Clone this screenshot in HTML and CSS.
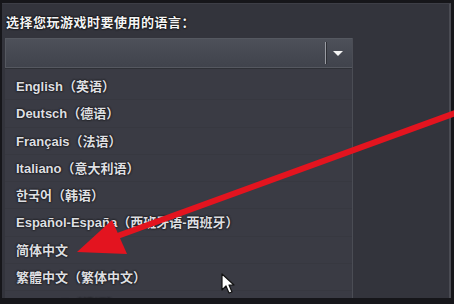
FILE: index.html
```html
<!DOCTYPE html>
<html lang="zh-CN">
<head>
    <meta charset="UTF-8">
    <title>语言选择</title>
    <link rel="stylesheet" href="styles.css">
</head>
<body>
    <div class="panel">
        <p class="label">选择您玩游戏时要使用的语言：</p>
        <div class="combo">
            <div class="select">
                <span class="divider"></span>
                <span class="caret"></span>
            </div>
            <ul class="options">
                <li>English（英语）</li>
                <li>Deutsch（德语）</li>
                <li>Français（法语）</li>
                <li>Italiano（意大利语）</li>
                <li>한국어（韩语）</li>
                <li>Español-España（西班牙语-西班牙）</li>
                <li>简体中文</li>
                <li>繁體中文（繁体中文）</li>
                <li>Русский（俄语）</li>
            </ul>
        </div>
    </div>

    <!-- annotation drawn over the screenshot -->
    <svg class="overlay" width="454" height="304" viewBox="0 0 454 304">
        <line x1="458" y1="112" x2="112" y2="238" stroke="#e3141f" stroke-width="6"/>
        <polygon points="77,252 127,254 112,220" fill="#e3141f"/>
    </svg>
    <svg class="cursor" width="14" height="22" viewBox="0 0 14 22">
        <path d="M1 1 L1 17 L5 13 L8 20 L11 19 L8 12 L13 12 Z" fill="#fff" stroke="#111" stroke-width="1.2" stroke-linejoin="round"/>
    </svg>
</body>
</html>
```

FILE: styles.css
```css
body {
    margin: 0;
    width: 454px;
    height: 304px;
    padding: 3px 3px 6px 2px;
    box-sizing: border-box;
    background: #16161a;
    font-family: 'Liberation Sans', Arial, 'Noto Sans CJK SC', sans-serif;
    overflow: hidden;
    position: relative;
}
.panel {
    height: 100%;
    background: #33343c;
    border-top: 1px solid #3d3e46;
    border-right: 2px solid #4a4b53;
    box-sizing: border-box;
    overflow: hidden;
}
.label {
    margin: 0;
    padding: 11px 0 0 4px;
    height: 16px;
    line-height: 16px;
    font-size: 13px;
    font-weight: bold;
    letter-spacing: 0.5px;
    color: #f4f4f4;
    text-shadow: 0 0 2px #000, 0 0 2px #000;
}
.combo {
    width: 347px;
    margin: 7px 0 0 3px;
    border-right: 1px solid #4b4d55;
}
.select {
    height: 30px;
    background: linear-gradient(#4d5059, #40434c);
    border: 1px solid #555860;
    border-right: none;
    box-sizing: border-box;
    display: flex;
    justify-content: flex-end;
    align-items: center;
}
.divider {
    width: 1px;
    height: 22px;
    background: #9a9ca3;
    box-shadow: 1px 0 0 #2d2f35;
    margin-right: 7px;
}
.caret {
    width: 0;
    height: 0;
    border-left: 5px solid transparent;
    border-right: 5px solid transparent;
    border-top: 5px solid #f4f4f4;
    margin-right: 9px;
}
.options {
    list-style: none;
    margin: 0;
    padding: 4px 0 0 0;
    background: #3a3b44;
    height: 240px;
    border-top: 1px solid #2e3036;
}
.options li {
    height: 27.3px;
    line-height: 27.3px;
    padding-left: 11px;
    font-size: 13px;
    font-weight: bold;
    color: #dedfe2;
    white-space: nowrap;
    text-shadow: 0 0 2px #111, 0 0 2px #111;
    border-bottom: 1px solid #373840;
    box-sizing: border-box;
}
.overlay {
    position: absolute;
    left: 0;
    top: 0;
    pointer-events: none;
}
.cursor {
    position: absolute;
    left: 221px;
    top: 273px;
}
```
